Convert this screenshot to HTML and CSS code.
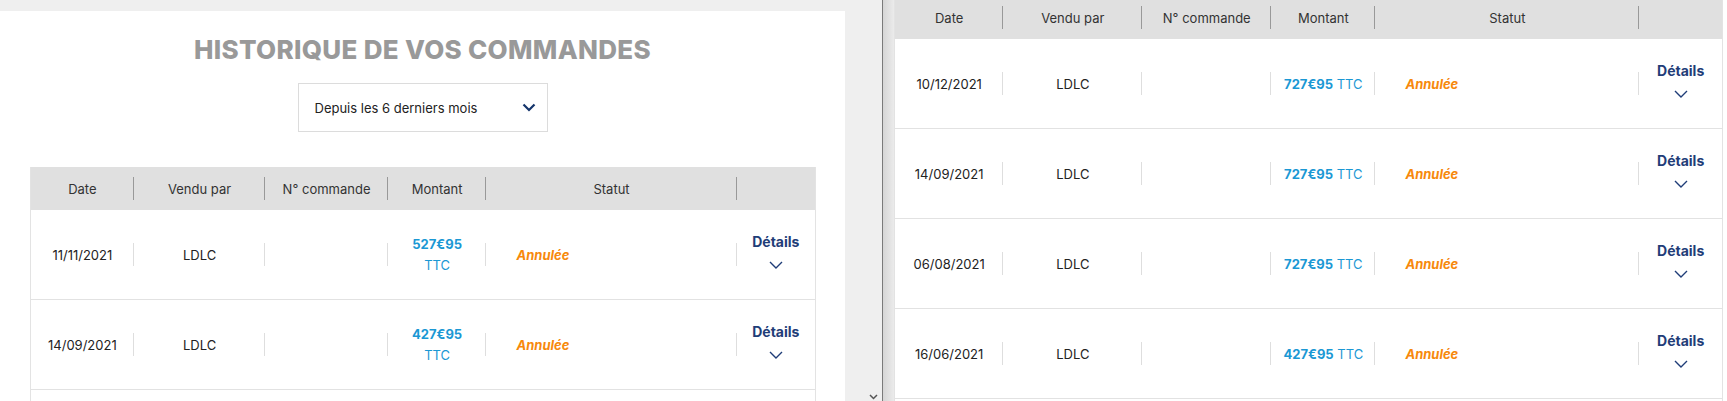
FILE: index.html
```html
<!DOCTYPE html>
<html lang="fr">
<head>
    <meta charset="UTF-8">
    <meta name="viewport" content="width=device-width, initial-scale=1.0">
    <title>Historique de vos commandes</title>
    <link rel="stylesheet" href="styles.css">
</head>
<body>

<div class="screen">

    <!-- left window: top of the page -->
    <section class="pane-left">
        <div class="page">
            <main class="card">
                <h1 class="title">Historique de vos commandes</h1>

                <div class="period-select">
                    <span>Depuis les 6 derniers mois</span>
                    <svg width="14" height="9" viewBox="0 0 14 9"><path d="M1.5 1.5 L7 7 L12.5 1.5" fill="none" stroke="#14346b" stroke-width="2.2"/></svg>
                </div>

                <div class="orders orders-narrow">
                    <div class="orders-head">
                        <div class="cell">Date</div>
                        <div class="cell">Vendu par</div>
                        <div class="cell">N° commande</div>
                        <div class="cell">Montant</div>
                        <div class="cell">Statut</div>
                        <div class="cell"></div>
                    </div>

                    <div class="order">
                        <div class="cell">11/11/2021</div>
                        <div class="cell">LDLC</div>
                        <div class="cell"></div>
                        <div class="cell"><span class="price"><b>527€95</b> <span>TTC</span></span></div>
                        <div class="cell cell-status"><span class="status">Annulée</span></div>
                        <div class="cell cell-details"><a class="details">Détails</a><svg width="14" height="8" viewBox="0 0 14 8"><path d="M1 1 L7 7 L13 1" fill="none" stroke="#1f3d78" stroke-width="1.4"/></svg></div>
                    </div>

                    <div class="order">
                        <div class="cell">14/09/2021</div>
                        <div class="cell">LDLC</div>
                        <div class="cell"></div>
                        <div class="cell"><span class="price"><b>427€95</b> <span>TTC</span></span></div>
                        <div class="cell cell-status"><span class="status">Annulée</span></div>
                        <div class="cell cell-details"><a class="details">Détails</a><svg width="14" height="8" viewBox="0 0 14 8"><path d="M1 1 L7 7 L13 1" fill="none" stroke="#1f3d78" stroke-width="1.4"/></svg></div>
                    </div>

                    <!-- next row, only its top edge is in view -->
                    <div class="order"></div>
                </div>
            </main>
        </div>
        <div class="scrollbar">
            <svg width="9" height="6" viewBox="0 0 9 6"><path d="M1 1 L4.5 4.5 L8 1" fill="none" stroke="#555" stroke-width="1.5"/></svg>
        </div>
    </section>

    <div class="pane-edge"></div>

    <!-- right window: same table, scrolled and wider -->
    <section class="pane-right">
        <div class="orders orders-wide">
            <div class="orders-head">
                <div class="cell">Date</div>
                <div class="cell">Vendu par</div>
                <div class="cell">N° commande</div>
                <div class="cell">Montant</div>
                <div class="cell">Statut</div>
                <div class="cell"></div>
            </div>

            <div class="order">
                <div class="cell">10/12/2021</div>
                <div class="cell">LDLC</div>
                <div class="cell"></div>
                <div class="cell"><span class="price"><b>727€95</b> <span>TTC</span></span></div>
                <div class="cell cell-status"><span class="status">Annulée</span></div>
                <div class="cell cell-details"><a class="details">Détails</a><svg width="14" height="8" viewBox="0 0 14 8"><path d="M1 1 L7 7 L13 1" fill="none" stroke="#1f3d78" stroke-width="1.4"/></svg></div>
            </div>

            <div class="order">
                <div class="cell">14/09/2021</div>
                <div class="cell">LDLC</div>
                <div class="cell"></div>
                <div class="cell"><span class="price"><b>727€95</b> <span>TTC</span></span></div>
                <div class="cell cell-status"><span class="status">Annulée</span></div>
                <div class="cell cell-details"><a class="details">Détails</a><svg width="14" height="8" viewBox="0 0 14 8"><path d="M1 1 L7 7 L13 1" fill="none" stroke="#1f3d78" stroke-width="1.4"/></svg></div>
            </div>

            <div class="order">
                <div class="cell">06/08/2021</div>
                <div class="cell">LDLC</div>
                <div class="cell"></div>
                <div class="cell"><span class="price"><b>727€95</b> <span>TTC</span></span></div>
                <div class="cell cell-status"><span class="status">Annulée</span></div>
                <div class="cell cell-details"><a class="details">Détails</a><svg width="14" height="8" viewBox="0 0 14 8"><path d="M1 1 L7 7 L13 1" fill="none" stroke="#1f3d78" stroke-width="1.4"/></svg></div>
            </div>

            <div class="order">
                <div class="cell">16/06/2021</div>
                <div class="cell">LDLC</div>
                <div class="cell"></div>
                <div class="cell"><span class="price"><b>427€95</b> <span>TTC</span></span></div>
                <div class="cell cell-status"><span class="status">Annulée</span></div>
                <div class="cell cell-details"><a class="details">Détails</a><svg width="14" height="8" viewBox="0 0 14 8"><path d="M1 1 L7 7 L13 1" fill="none" stroke="#1f3d78" stroke-width="1.4"/></svg></div>
            </div>

            <div class="order"></div>
        </div>
    </section>

</div>

</body>
</html>
```

FILE: styles.css
```css
body {
    margin: 0;
    font-family: Inter, "Open Sans", sans-serif;
    color: #222;
    background-color: #fff;
}

.screen {
    display: flex;
    width: 1727px;
    height: 401px;
    overflow: hidden;
}

/* left window */
.pane-left {
    flex: none;
    width: 882px;
    display: flex;
    background-color: #efefef;
    border-right: 1px solid #7a7a7a;
}

.page {
    width: 865px;
    padding-top: 11px;
    display: flex;
    flex-direction: column;
}

.card {
    flex: 1;
    width: 845px;
    background-color: #fff;
    padding-top: 24px;
}

.scrollbar {
    flex: 1;
    display: flex;
    align-items: flex-end;
    justify-content: center;
    padding-bottom: 1px;
}

.pane-edge {
    flex: none;
    width: 11px;
    background: linear-gradient(to right, #d6d6d6, #ebebeb);
}

.pane-right {
    flex: 1;
    background-color: #fff;
    overflow: hidden;
}

/* heading + filter */
.title {
    margin: 0;
    text-align: center;
    text-transform: uppercase;
    font-size: 26px;
    line-height: 30px;
    font-weight: 800;
    letter-spacing: 0.3px;
    color: #999;
}

.period-select {
    width: 250px;
    height: 49px;
    box-sizing: border-box;
    margin: 18px auto 0;
    padding: 0 11px 0 16px;
    display: flex;
    align-items: center;
    justify-content: space-between;
    border: 1px solid #dcdcdc;
    font-size: 13px;
}

/* orders table */
.orders {
    box-sizing: border-box;
    border-left: 1px solid #e3e3e3;
    border-right: 1px solid #e3e3e3;
    font-size: 13px;
}

.orders-narrow {
    width: 786px;
    margin: 35px 0 0 30px;
}

.orders-wide {
    width: 829px;
    margin-top: -4px;
}

.orders-head, .order {
    display: grid;
    grid-template-columns: 13.1% 16.8% 15.6% 12.6% 31.9% 1fr;
}

.orders-head {
    height: 43px;
    background-color: #e0e0e0;
    color: #333;
}

.order {
    height: 90px;
    box-sizing: border-box;
    border-bottom: 1px solid #e2e2e2;
}

.cell {
    display: flex;
    align-items: center;
    justify-content: center;
    background: linear-gradient(#dedede, #dedede) right center / 1px 23px no-repeat;
}

.orders-head .cell {
    background-image: linear-gradient(#999, #999);
}

.orders-head .cell:last-child, .order .cell:last-child {
    background: none;
}

.price {
    color: #1b98d4;
    text-align: center;
}

.price b {
    font-weight: 700;
}

.orders-narrow .price {
    display: flex;
    flex-direction: column;
    line-height: 17px;
    gap: 4px;
}

.cell-status {
    justify-content: flex-start;
    padding-left: 30px;
}

.status {
    color: #f7890c;
    font-weight: 700;
    font-style: italic;
}

.cell-details {
    flex-direction: column;
    gap: 11px;
    padding-bottom: 8px;
}

.details {
    color: #1f3d78;
    font-weight: 700;
    font-size: 14px;
    line-height: 17px;
    cursor: pointer;
}
```
